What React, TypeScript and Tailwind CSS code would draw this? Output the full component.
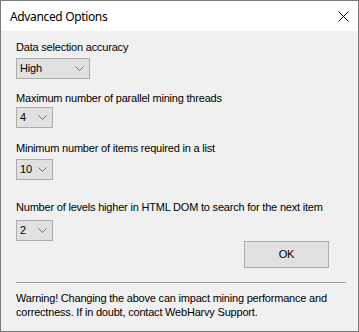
import { ReactNode } from 'react';

function Chevron() {
  return (
    <svg width="9" height="5" viewBox="0 0 9 5" fill="none" stroke="#707070" strokeWidth="1">
      <path d="M0.5 0.5 L4.5 4.5 L8.5 0.5" />
    </svg>
  );
}

function Combo({ value, width }: { value: string; width: string }) {
  return (
    <div
      className={`${width} h-[21px] bg-[#e1e1e1] border border-[#adadad] flex items-center justify-between pl-[3px] pr-[5px]`}
    >
      <span className="leading-[13px]">{value}</span>
      <Chevron />
    </div>
  );
}

function Field({ label, children, className }: { label: string; children: ReactNode; className: string }) {
  return (
    <div className={className}>
      <div className="leading-[13px] h-[13px] whitespace-nowrap">{label}</div>
      {children}
    </div>
  );
}

export default function App() {
  return (
    <div className="w-[359px] h-[332px] border border-[#7a7a7a] bg-[#f0f0f0] flex flex-col text-black font-['Liberation_Sans',Arial,sans-serif] text-[11px] tracking-[-0.2px]">
      {/* Title bar */}
      <div className="h-[30px] bg-white flex items-center justify-between pl-[9px] pr-[9px] shrink-0">
        <span className="font-['Noto_Sans',sans-serif] text-[12px] tracking-[-0.35px] leading-[16px] pt-[1px]">Advanced Options</span>
        <svg width="11" height="11" viewBox="0 0 11 11" stroke="#000" strokeWidth="1">
          <path d="M0.5 0.5 L10.5 10.5 M10.5 0.5 L0.5 10.5" />
        </svg>
      </div>

      <div className="px-[15px] flex flex-col">
        <Field label="Data selection accuracy" className="pt-[10px] flex flex-col gap-[4px]">
          <Combo value="High" width="w-[74px]" />
        </Field>
        <Field label="Maximum number of parallel mining threads" className="pt-[13px] flex flex-col gap-[2px]">
          <Combo value="4" width="w-[37px]" />
        </Field>
        <Field label="Minimum number of items required in a list" className="pt-[14px] flex flex-col gap-[4px]">
          <Combo value="10" width="w-[37px]" />
        </Field>
        <Field label="Number of levels higher in HTML DOM to search for the next item" className="pt-[21px] flex flex-col gap-[6px]">
          <Combo value="2" width="w-[37px]" />
        </Field>

        <div className="flex justify-end pr-[14px]">
          <button className="w-[85px] h-[27px] bg-[#e1e1e1] border border-[#adadad] text-[11px] leading-[13px]">OK</button>
        </div>

        <div className="mt-[14px] w-[330px] border-t border-[#a0a0a0] border-b border-b-white" />

        <p className="mt-[7px] leading-[14px]">
          Warning! Changing the above can impact mining performance and correctness. If in doubt, contact WebHarvy Support.
        </p>
      </div>
    </div>
  );
}
